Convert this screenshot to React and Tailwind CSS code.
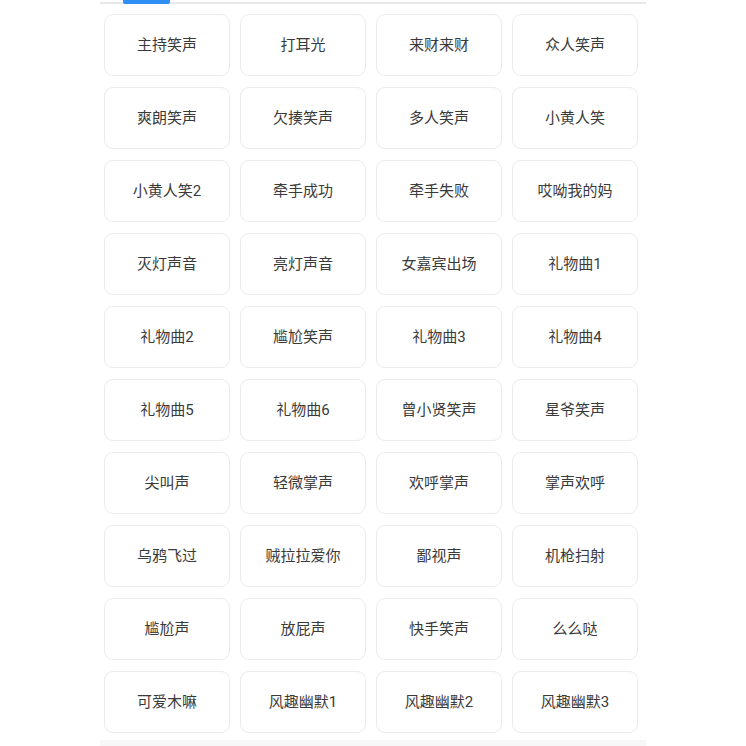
const SOUNDS = [
  '主持笑声', '打耳光', '来财来财', '众人笑声',
  '爽朗笑声', '欠揍笑声', '多人笑声', '小黄人笑',
  '小黄人笑2', '牵手成功', '牵手失败', '哎呦我的妈',
  '灭灯声音', '亮灯声音', '女嘉宾出场', '礼物曲1',
  '礼物曲2', '尴尬笑声', '礼物曲3', '礼物曲4',
  '礼物曲5', '礼物曲6', '曾小贤笑声', '星爷笑声',
  '尖叫声', '轻微掌声', '欢呼掌声', '掌声欢呼',
  '乌鸦飞过', '贼拉拉爱你', '鄙视声', '机枪扫射',
  '尴尬声', '放屁声', '快手笑声', '么么哒',
  '可爱木嘛', '风趣幽默1', '风趣幽默2', '风趣幽默3',
]

export default function App() {
  return (
    <div className="w-[746px] h-[746px] overflow-hidden bg-white" style={{ fontFamily: 'Roboto, "Noto Sans CJK SC", sans-serif' }}>
      <div className="w-[546px] ml-[100px]">
        {/* tab bar line */}
        <div className="relative h-[4px]">
          <div className="absolute left-0 right-0 top-[2px] h-[2px] bg-[#e8e8ec]" />
          <div className="absolute left-[23px] top-0 h-[4px] w-[47px] rounded-b-[2px] bg-[#2f8ff5]" />
        </div>

        <div className="grid grid-cols-4 gap-x-[10px] gap-y-[11px] pl-[4px] pr-[8px] pt-[10px]">
          {SOUNDS.map((s) => (
            <div
              key={s}
              className="h-[62px] flex items-center justify-center pt-[1px] rounded-[9px] border border-[#ebebeb] bg-white text-[15px] text-[#3a3a3a]"
            >
              {s}
            </div>
          ))}
        </div>
        <div className="mt-[7px] h-[10px] bg-[#f7f7f7]" />
      </div>
    </div>
  )
}
